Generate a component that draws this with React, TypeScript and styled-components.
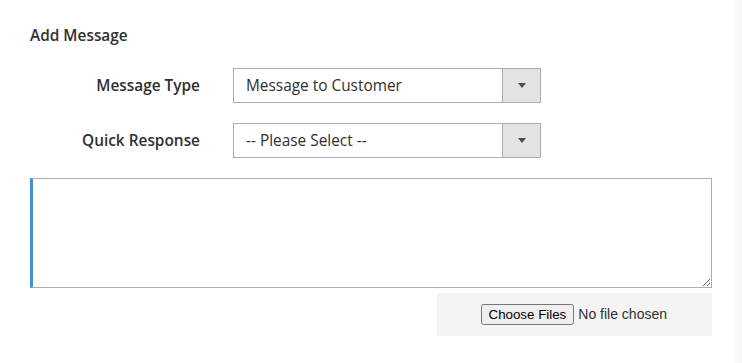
import React from "react";
import styled, { createGlobalStyle } from "styled-components";

const Global = createGlobalStyle`
  html, body { margin: 0; padding: 0; background: #fff; }
  body { font-family: "Open Sans", "Noto Sans", sans-serif; color: #303030; }
`;

const Page = styled.div`
  display: flex;
  width: 742px;
  min-height: 363px;
`;

const Main = styled.div`
  flex: 1;
  padding: 26px 0 0 30px;
`;

const Edge = styled.div`
  width: 10px;
  background: linear-gradient(to right, #ffffff, #f6f6f6);
`;

const Section = styled.div`
  width: 682px;
  display: flex;
  flex-direction: column;
`;

const Heading = styled.div`
  font-size: 15.4px;
  font-weight: 600;
  line-height: 20px;
  color: #303030;
  margin-bottom: 22px;
`;

const Field = styled.div`
  display: flex;
  align-items: center;
  gap: 33px;
  margin-bottom: 20px;
`;

const Label = styled.label`
  width: 170px;
  text-align: right;
  font-size: 15.4px;
  font-weight: 600;
  color: #303030;
`;

const SelectBox = styled.div`
  box-sizing: border-box;
  width: 308px;
  height: 35px;
  border: 1px solid #adadad;
  display: flex;
  align-items: stretch;
  background: #fff;
`;

const SelectValue = styled.div`
  flex: 1;
  display: flex;
  align-items: center;
  padding-left: 12px;
  font-size: 15.4px;
  color: #303030;
`;

const ArrowButton = styled.div`
  width: 37px;
  border-left: 1px solid #adadad;
  background: #e3e3e3;
  display: flex;
  align-items: center;
  justify-content: center;
`;

const Arrow = styled.span`
  width: 0;
  height: 0;
  border-left: 4.5px solid transparent;
  border-right: 4.5px solid transparent;
  border-top: 5px solid #514943;
`;

const TextArea = styled.textarea`
  box-sizing: border-box;
  width: 682px;
  height: 110px;
  margin: 0;
  border: 1px solid #adadad;
  border-left: 3px solid #4a8fd3;
  outline: none;
  resize: vertical;
  display: block;
`;

const FileRow = styled.div`
  display: flex;
  justify-content: flex-end;
  margin-top: 5px;
`;

const FileBox = styled.div`
  width: 275px;
  height: 43px;
  background: #f4f4f4;
  display: flex;
  align-items: center;
  justify-content: center;
`;

const FileInput = styled.input`
  font-family: "Liberation Sans", Arial, sans-serif;
  font-size: 14px;
  color: #303030;
  width: 188px;

  &::file-selector-button {
    font-family: "Liberation Sans", Arial, sans-serif;
    font-size: 13.33px;
  }
`;

const Select = ({ value }: { value: string }) => (
  <SelectBox>
    <SelectValue>{value}</SelectValue>
    <ArrowButton>
      <Arrow />
    </ArrowButton>
  </SelectBox>
);

export default function App() {
  return (
    <>
      <Global />
      <Page>
        <Main>
          <Section>
            <Heading>Add Message</Heading>
            <Field>
              <Label>Message Type</Label>
              <Select value="Message to Customer" />
            </Field>
            <Field>
              <Label>Quick Response</Label>
              <Select value="-- Please Select --" />
            </Field>
            <TextArea />
            <FileRow>
              <FileBox>
                <FileInput type="file" multiple />
              </FileBox>
            </FileRow>
          </Section>
        </Main>
        <Edge />
      </Page>
    </>
  );
}
